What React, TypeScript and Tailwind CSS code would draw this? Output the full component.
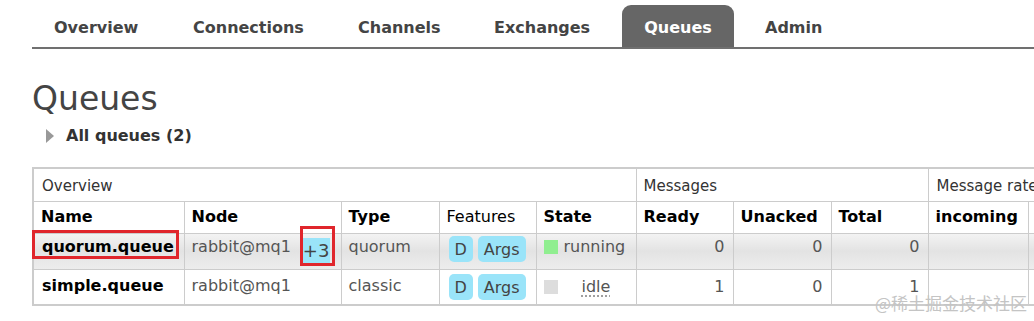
import React from "react";

const tabs = [
  { t: "Overview", w: "w-[139px] pl-[22px]" },
  { t: "Connections", w: "w-[165px] pl-[22px]" },
  { t: "Channels", w: "w-[136px] pl-[22px]" },
  { t: "Exchanges", w: "w-[150px] pl-[22px]" },
  { t: "Queues", w: "w-[112px] justify-center rounded-t-[9px] bg-[#666] text-white" },
  { t: "Admin", w: "pl-[31px]" },
];

function Badge({ children }: { children: React.ReactNode }) {
  return (
    <span className="inline-block rounded-[5px] bg-[#9ae4f9] px-[6px] pt-[3px] pb-[2px] leading-[21px] text-[#444]">
      {children}
    </span>
  );
}

const th = "border border-[#ccc] px-[7px] text-left font-bold text-black";
const td = "border border-[#ccc] px-[7px] text-[#555]";
const num = "border border-[#ccc] px-[8px] text-right text-[#555]";
const top = "border border-[#ccc] px-[8px] pt-[1px] text-right text-[#555]";

export default function App() {
  return (
    <div className="relative h-[321px] w-[1034px] overflow-hidden bg-white font-['DejaVu_Sans',Verdana,sans-serif] text-[#333]">
      <nav className="ml-[32px] mt-[5px] flex h-[44px] items-stretch border-b-2 border-[#707070] text-[16px] font-bold text-[#444]">
        {tabs.map(({ t, w }) => (
          <div key={t} className={`flex shrink-0 items-center pt-[4px] ${w}`}>
            {t}
          </div>
        ))}
      </nav>

      <h1 className="ml-[32px] mt-[30px] text-[33px] leading-[40px] font-normal text-[#444]">Queues</h1>
      <div className="ml-[46px] mt-[5px] flex items-center gap-[12px] text-[16px] font-bold text-[#333]">
        <span className="inline-block h-0 w-0 border-y-[7px] border-l-[8px] border-y-transparent border-l-[#999]" />
        <span>All queues (2)</span>
      </div>

      <table className="ml-[32px] mt-[19px] w-[1100px] table-fixed border-collapse border-2 border-[#ccc] text-[16px]">
        <colgroup>
          <col className="w-[151px]" />
          <col className="w-[157px]" />
          <col className="w-[98px]" />
          <col className="w-[97px]" />
          <col className="w-[100px]" />
          <col className="w-[97px]" />
          <col className="w-[98px]" />
          <col className="w-[97px]" />
          <col className="w-[100px]" />
          <col className="w-[105px]" />
        </colgroup>
        <thead>
          <tr className="h-[33px]">
            <th colSpan={5} className="border border-[#ccc] px-[8px] pt-[2px] text-left text-[15px] font-normal text-[#333]">
              Overview
            </th>
            <th colSpan={3} className="border border-[#ccc] px-[7px] pt-[2px] text-left text-[15px] font-normal text-[#333]">
              Messages
            </th>
            <th colSpan={2} className="whitespace-nowrap border border-[#ccc] px-[8px] pt-[2px] text-left text-[15px] font-normal text-[#333]">
              Message rates
            </th>
          </tr>
          <tr className="h-[32px]">
            <th className={th}>Name</th>
            <th className={th}>Node</th>
            <th className={th}>Type</th>
            <th className="border border-[#ccc] px-[7px] text-left font-normal text-black">Features</th>
            <th className={th}>State</th>
            <th className={th}>Ready</th>
            <th className={th}>Unacked</th>
            <th className={th}>Total</th>
            <th className={th}>incoming</th>
            <th className={th}>deliver</th>
          </tr>
        </thead>
        <tbody className="[&_tr:first-child>td]:align-top">
          <tr className="h-[36px] bg-gradient-to-b from-[#f4f4f4] via-[#e3e3e3] to-[#ededed]">
            <td className="relative border border-[#ccc] px-[8px] pt-[1px] font-bold text-black">
              quorum.queue
              <span className="absolute top-[-4px] left-[-2px] h-[29px] w-[147px] border-[3px] border-[#e0262c]" />
            </td>
            <td className="relative border border-[#ccc] px-[7px] pt-[1px] text-[#555]">
              <div className="flex items-start">
                <span>rabbit@mq1</span>
                <span className="ml-[11px] mt-[3px] bg-[#9ae4f9] px-[1px] text-[18px] leading-[26px] text-[#444]">+3</span>
              </div>
              <span className="absolute top-[-8px] left-[115px] h-[40px] w-[35px] border-[3px] border-[#e0262c]" />
            </td>
            <td className="border border-[#ccc] px-[7px] pt-[1px] text-[#555]">quorum</td>
            <td className="border border-[#ccc] px-[9px] pt-[2px]">
              <div className="flex gap-[5px]">
                <Badge>D</Badge>
                <Badge>Args</Badge>
              </div>
            </td>
            <td className="border border-[#ccc] px-[7px] pt-[1px] text-[#555]">
              <span className="flex items-center gap-[6px]">
                <span className="inline-block h-[14px] w-[14px] bg-[#90ee90]" />
                running
              </span>
            </td>
            <td className={top}>0</td>
            <td className={top}>0</td>
            <td className={top}>0</td>
            <td className={td}></td>
            <td className={td}></td>
          </tr>
          <tr className="h-[36px]">
            <td className="border border-[#ccc] px-[8px] pb-[2px] font-bold text-black">simple.queue</td>
            <td className="border border-[#ccc] px-[7px] pb-[2px] text-[#555]">rabbit@mq1</td>
            <td className="border border-[#ccc] px-[7px] pb-[2px] text-[#555]">classic</td>
            <td className="border border-[#ccc] px-[9px] pt-[1px]">
              <div className="flex gap-[5px]">
                <Badge>D</Badge>
                <Badge>Args</Badge>
              </div>
            </td>
            <td className={td}>
              <span className="flex items-center">
                <span className="inline-block h-[14px] w-[14px] bg-[#ddd]" />
                <span className="ml-[24px] underline decoration-dotted decoration-[#888] underline-offset-[4px]">idle</span>
              </span>
            </td>
            <td className={num}>1</td>
            <td className={num}>0</td>
            <td className={num}>1</td>
            <td className={td}></td>
            <td className={td}></td>
          </tr>
        </tbody>
      </table>

      <div className="absolute right-[7px] bottom-[6px] font-['Noto_Sans_CJK_SC',sans-serif] text-[17px] text-[#c4c4c4]">
        @稀土掘金技术社区
      </div>
    </div>
  );
}
